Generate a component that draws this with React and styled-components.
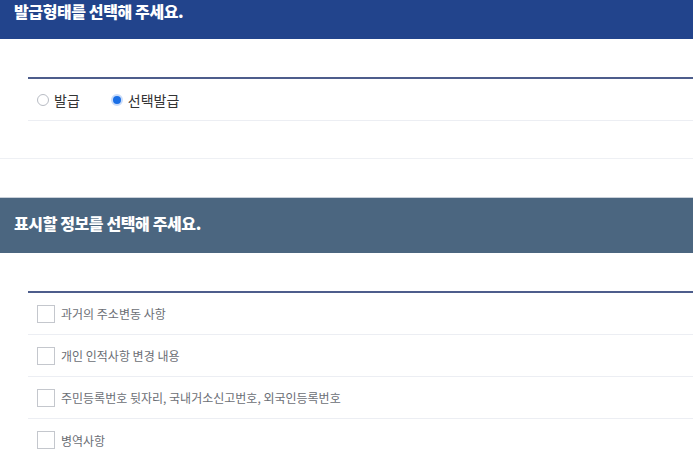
import React, { useState } from 'react';
import styled, { createGlobalStyle } from 'styled-components';

const GlobalStyle = createGlobalStyle`
  body {
    margin: 0;
    background: #fff;
    font-family: "Noto Sans CJK KR", "Noto Sans", sans-serif;
  }
`;

const Header = styled.div`
  box-sizing: border-box;
  height: ${(p) => p.height}px;
  padding: ${(p) => p.pad}px 14px 0;
  background: ${(p) => p.bg};
  border-top: ${(p) => (p.topLine ? '1px solid #c9d0d9' : 'none')};
  color: #fff;
  font-size: 16px;
  font-weight: 900;
  letter-spacing: -0.4px;
  line-height: 20px;
`;

const Body = styled.div`
  padding: ${(p) => p.top}px 0 0 28px;
`;

const List = styled.div`
  border-top: 2px solid #4d5d8c;
`;

const Row = styled.div`
  box-sizing: border-box;
  height: ${(p) => p.h}px;
  display: flex;
  align-items: center;
  gap: ${(p) => p.gap || 0}px;
  padding-left: 9px;
  border-bottom: ${(p) => (p.last ? 'none' : '1px solid #eceef3')};
`;

const RadioLabel = styled.label`
  display: flex;
  align-items: center;
  gap: 5px;
  font-size: 14px;
  color: #333;
  cursor: pointer;
`;

const RadioDot = styled.span`
  box-sizing: border-box;
  width: 12px;
  height: 12px;
  border-radius: 50%;
  border: ${(p) => (p.on ? '2px solid #c9dcfa' : '1px solid #b8bcc4')};
  background: ${(p) => (p.on ? '#1a6fe6' : '#fff')};
`;

const CheckLabel = styled.label`
  display: flex;
  align-items: center;
  gap: 6px;
  font-size: 12px;
  color: #6b6e75;
  cursor: pointer;
`;

const Box = styled.span`
  box-sizing: border-box;
  width: 18px;
  height: 18px;
  border: 1px solid #c4c7cd;
  background: ${(p) => (p.on ? '#e8f0fd' : '#fff')};
`;

const Divider = styled.div`
  height: 37px;
  border-bottom: 1px solid #eef0f4;
  margin-bottom: 38px;
`;

const options = [
  '과거의 주소변동 사항',
  '개인 인적사항 변경 내용',
  '주민등록번호 뒷자리, 국내거소신고번호, 외국인등록번호',
  '병역사항',
];

export default function App() {
  const [kind, setKind] = useState('select');
  const [checked, setChecked] = useState({});

  return (
    <>
      <GlobalStyle />
      <Header height={39} pad={1} bg="#22448c">발급형태를 선택해 주세요.</Header>
      <Body top={38}>
        <List>
          <Row h={42} gap={31}>
            <RadioLabel onClick={() => setKind('all')}>
              <RadioDot on={kind === 'all'} />
              발급
            </RadioLabel>
            <RadioLabel onClick={() => setKind('select')}>
              <RadioDot on={kind === 'select'} />
              선택발급
            </RadioLabel>
          </Row>
        </List>
      </Body>
      <Divider />
      <Header height={56} pad={15} bg="#4b6680" topLine>표시할 정보를 선택해 주세요.</Header>
      <Body top={38}>
        <List>
          {options.map((o, i) => (
            <Row key={o} h={42} last={i === options.length - 1}>
              <CheckLabel onClick={() => setChecked({ ...checked, [i]: !checked[i] })}>
                <Box on={checked[i]} />
                {o}
              </CheckLabel>
            </Row>
          ))}
        </List>
      </Body>
    </>
  );
}
